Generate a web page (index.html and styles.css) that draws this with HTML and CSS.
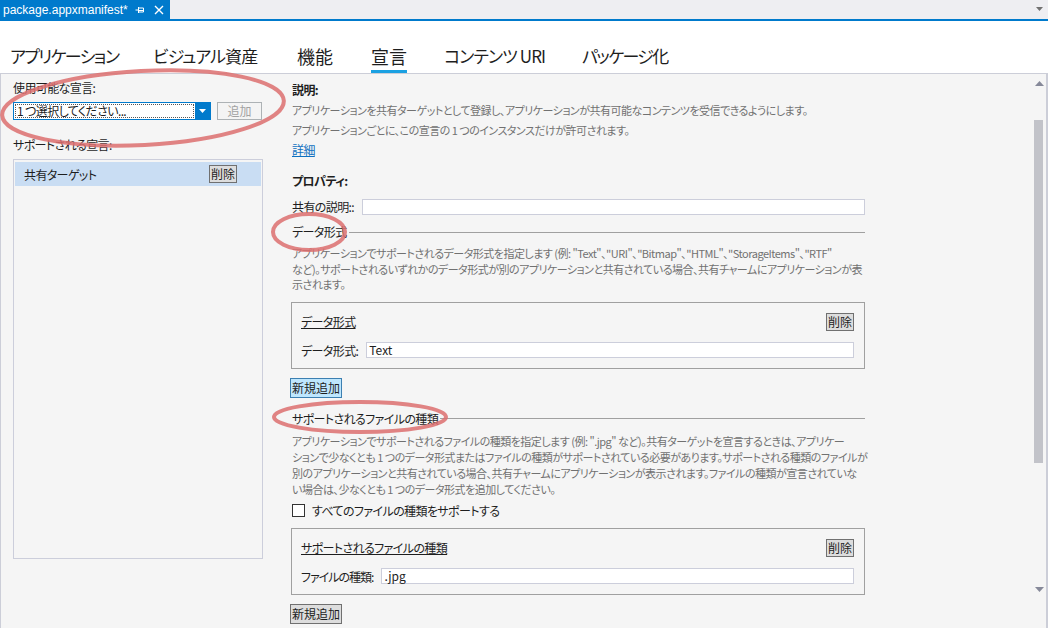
FILE: index.html
```html
<!DOCTYPE html>
<html lang="ja">

<head>
    <meta charset="UTF-8" />
    <title>package.appxmanifest</title>
    <link rel="stylesheet" href="styles.css">
</head>

<body>

    <div class="doc-tabs">
        <div class="doc-tab">
            <span class="doc-name">package.appxmanifest*</span>
            <svg class="pin" width="10" height="8" viewBox="0 0 10 8">
                <path d="M0.5 4h2.5M3.5 1v6M3.5 2h5v4h-5M4 4.5h4.5" stroke="#fff" stroke-width="1" fill="none" />
            </svg>
            <svg class="close" width="10" height="10" viewBox="0 0 10 10">
                <path d="M1 1l8 8M9 1l-8 8" stroke="#fff" stroke-width="1.4" />
            </svg>
        </div>
        <svg class="doc-menu" width="8" height="5" viewBox="0 0 8 5">
            <path d="M0 0h7l-3.5 4z" fill="#717171" />
        </svg>
    </div>

    <div class="page-tabs">
        <span class="tab w1 tight"><span>アプリケーション</span></span>
        <span class="tab w2"><span>ビジュアル資産</span></span>
        <span class="tab w3 kanji"><span>機能</span></span>
        <span class="tab w4 kanji active"><span>宣言</span></span>
        <span class="tab w5"><span>コンテンツ URI</span></span>
        <span class="tab tight"><span>パッケージ化</span></span>
    </div>

    <div class="content">
        <div class="left">
            <div class="label">使用可能な宣言:</div>
            <div class="pick-row">
                <div class="combo">
                    <span class="combo-text">1 つ選択してください...</span>
                    <span class="combo-arrow">
                        <svg width="7" height="4" viewBox="0 0 7 4"><path d="M0 0h7l-3.5 4z" fill="#fff" /></svg>
                    </span>
                </div>
                <button class="btn disabled">追加</button>
            </div>
            <div class="label">サポートされる宣言:</div>
            <div class="decl-list">
                <div class="decl-item">
                    <span>共有ターゲット</span>
                    <button class="btn small">削除</button>
                </div>
            </div>
        </div>

        <div class="right">
            <div class="heading">説明:</div>
            <p class="note">アプリケーションを共有ターゲットとして登録し、アプリケーションが共有可能なコンテンツを受信できるようにします。</p>
            <p class="note">アプリケーションごとに、この宣言の 1 つのインスタンスだけが許可されます。</p>
            <a class="more" href="#">詳細</a>

            <div class="heading props">プロパティ:</div>
            <div class="field">
                <span class="field-label">共有の説明::</span>
                <span class="input"></span>
            </div>

            <div class="section">データ形式</div>
            <p class="note block short">アプリケーションでサポートされるデータ形式を指定します (例: "Text"、"URI"、"Bitmap"、"HTML"、"StorageItems"、"RTF"<br>など)。サポートされるいずれかのデータ形式が別のアプリケーションと共有されている場合、共有チャームにアプリケーションが表<br>示されます。</p>
            <div class="entry">
                <div class="entry-head">
                    <span class="entry-title">データ形式</span>
                    <button class="btn small">削除</button>
                </div>
                <div class="field inner">
                    <span class="field-label">データ形式:</span>
                    <span class="input">Text</span>
                </div>
            </div>
            <button class="btn add focused">新規追加</button>

            <div class="section">サポートされるファイルの種類</div>
            <p class="note block">アプリケーションでサポートされるファイルの種類を指定します (例: ".jpg" など)。共有ターゲットを宣言するときは、アプリケー<br>ションで少なくとも 1 つのデータ形式またはファイルの種類がサポートされている必要があります。サポートされる種類のファイルが<br>別のアプリケーションと共有されている場合、共有チャームにアプリケーションが表示されます。ファイルの種類が宣言されていな<br>い場合は、少なくとも 1 つのデータ形式を追加してください。</p>
            <label class="check">
                <span class="box"></span>
                すべてのファイルの種類をサポートする
            </label>
            <div class="entry">
                <div class="entry-head">
                    <span class="entry-title">サポートされるファイルの種類</span>
                    <button class="btn small">削除</button>
                </div>
                <div class="field inner">
                    <span class="field-label tight">ファイルの種類:</span>
                    <span class="input">.jpg</span>
                </div>
            </div>
            <button class="btn add">新規追加</button>
        </div>

        <div class="scrollbar">
            <svg class="arrow" width="9" height="5" viewBox="0 0 9 5"><path d="M4.5 0l4.5 5H0z" fill="#868999" /></svg>
            <div class="track"><div class="thumb"></div></div>
            <svg class="arrow" width="9" height="5" viewBox="0 0 9 5"><path d="M0 0h9L4.5 5z" fill="#868999" /></svg>
        </div>
    </div>

    <!-- 赤い丸の注釈 -->
    <svg class="marks" width="1048" height="628" viewBox="0 0 1048 628">
        <g fill="none" stroke="#dc6e6e" stroke-width="4" stroke-opacity="0.85">
            <ellipse cx="143" cy="108" rx="141" ry="37" transform="rotate(-3 143 108)" />
            <ellipse cx="309" cy="232" rx="36" ry="18" />
            <ellipse cx="360" cy="417" rx="86" ry="15" />
        </g>
    </svg>

</body>

</html>
```

FILE: styles.css
```css
body {
    margin: 0;
    width: 1048px;
    height: 628px;
    overflow: hidden;
    font-family: "Noto Sans CJK JP", "Liberation Sans", sans-serif;
    font-feature-settings: "palt";
    font-size: 12px;
    letter-spacing: -0.6px;
    color: #1e1e1e;
    background: #fff;
    position: relative;
}

/* ドキュメントタブ */
.doc-tabs {
    height: 19px;
    background: #eeeef2;
    border-bottom: 2px solid #007acc;
    display: flex;
    align-items: center;
    justify-content: space-between;
}

.doc-tab {
    height: 19px;
    width: 170px;
    background: #007acc;
    color: #fff;
    display: flex;
    align-items: center;
    padding-left: 3px;
    box-sizing: border-box;
    font-family: "Liberation Sans", sans-serif;
    font-size: 12px;
    letter-spacing: 0;
}

.doc-name {
    flex: 1;
}

.pin {
    margin-right: 9px;
}

.close {
    margin-right: 6px;
}

.doc-menu {
    margin-right: 4px;
}

/* ページタブ */
.page-tabs {
    height: 52px;
    background: #fff;
    border-bottom: 1px solid #ccced8;
    display: flex;
    align-items: flex-end;
    padding-left: 10px;
}

.tab {
    font-size: 17px;
    letter-spacing: -0.9px;
    line-height: 22px;
    white-space: nowrap;
}

.tab.tight {
    letter-spacing: -1.6px;
}

.tab.kanji {
    font-size: 18px;
    letter-spacing: 0;
}

.tab span {
    display: inline-block;
    padding-bottom: 3px;
    border-bottom: 3px solid transparent;
}

.tab.active span {
    border-bottom-color: #1ba1e2;
}

.w1 { width: 143px; }
.w2 { width: 144px; }
.w3 { width: 74px; }
.w4 { width: 73px; }
.w5 { width: 138px; }

/* 本体 */
.content {
    height: 555px;
    background: #f5f5f5;
    border-left: 1px solid #ccced8;
    border-right: 2px solid #ccced8;
    border-bottom: 1px solid #ccced8;
    display: flex;
    box-sizing: border-box;
}

.left {
    width: 277px;
    padding: 6px 0 0 12px;
    box-sizing: border-box;
}

.label {
    line-height: 16px;
}

.pick-row {
    display: flex;
    gap: 6px;
    margin: 6px 0 17px;
}

.combo {
    width: 198px;
    height: 18px;
    background: #fff;
    border: 1px solid #007acc;
    box-sizing: border-box;
    display: flex;
}

.combo-text {
    flex: 1;
    margin: 1px;
    border: 1px dotted #555;
    line-height: 12px;
    padding-left: 1px;
}

.combo-arrow {
    width: 15px;
    background: #007acc;
    display: flex;
    align-items: center;
    justify-content: center;
}

.btn {
    font-family: inherit;
    font-size: 12px;
    letter-spacing: 0;
    line-height: 14px;
    padding: 1px 1px;
    background: #dddddd;
    border: 1px solid #707070;
    color: #1e1e1e;
    border-radius: 0;
}

.btn.disabled {
    width: 45px;
    height: 18px;
    background: #f4f4f4;
    border-color: #adb2b5;
    color: #a2a2a2;
}

.decl-list {
    width: 250px;
    height: 400px;
    margin-top: 6px;
    border: 1px solid #cccedb;
    box-sizing: border-box;
    padding: 2px 1px;
}

.decl-item {
    height: 24px;
    background: #c9ddf3;
    display: flex;
    align-items: center;
    justify-content: space-between;
    padding: 0 24px 0 9px;
}

/* 右側 */
.right {
    width: 573px;
    padding: 7px 0 0 14px;
}

.heading {
    font-weight: bold;
    line-height: 18px;
}

.heading.props {
    margin-top: 13px;
}

.note {
    margin: 2px 0 0;
    font-size: 11px;
    letter-spacing: -0.5px;
    color: #717171;
    line-height: 18px;
    white-space: nowrap;
}

.note.block {
    margin-top: 5px;
    line-height: 16px;
}

.note.short {
    line-height: 15.5px;
}

.more {
    display: inline-block;
    margin-top: 2px;
    color: #0e70c0;
    line-height: 18px;
}

.field {
    display: flex;
    align-items: center;
    margin-top: 8px;
    gap: 8px;
}

.field-label {
    white-space: nowrap;
}

.field-label.tight {
    letter-spacing: -1px;
}

.input {
    flex: 1;
    height: 16px;
    background: #fff;
    border: 1px solid #cccedb;
    box-sizing: border-box;
    line-height: 14px;
    padding-left: 2px;
    letter-spacing: 0;
}

.section {
    display: flex;
    align-items: center;
    margin-top: 8px;
    line-height: 18px;
    gap: 2px;
}

.section::after {
    content: "";
    flex: 1;
    height: 1px;
    background: #a0a0a0;
}

.entry {
    margin: 9px 0 0 -1px;
    height: 67px;
    border: 1px solid #a0a0a0;
    box-sizing: border-box;
    padding: 10px 10px 0 9px;
}

.entry-head {
    display: flex;
    justify-content: space-between;
    align-items: center;
}

.entry-title {
    text-decoration: underline;
}

.field.inner {
    margin-top: 11px;
}

.btn.add {
    display: block;
    padding: 2px 1px;
    margin: 9px 0 12px -2px;
}

.btn.focused {
    background: #bee6fd;
    border-color: #3c7fb1;
}

.check {
    display: flex;
    align-items: center;
    gap: 7px;
    margin: 5px 0 0;
}

.check .box {
    width: 13px;
    height: 13px;
    border: 1px solid #333;
    background: #fff;
    box-sizing: border-box;
}

/* スクロールバー */
.scrollbar {
    margin-left: auto;
    width: 13px;
    display: flex;
    flex-direction: column;
    align-items: center;
    padding: 7px 0 36px;
    box-sizing: border-box;
}

.track {
    flex: 1;
    width: 100%;
    padding-top: 34px;
}

.thumb {
    width: 9px;
    height: 343px;
    margin-left: 1px;
    background: #c2c3c9;
}

/* 注釈 */
.marks {
    position: absolute;
    left: 0;
    top: 0;
    pointer-events: none;
}
```
